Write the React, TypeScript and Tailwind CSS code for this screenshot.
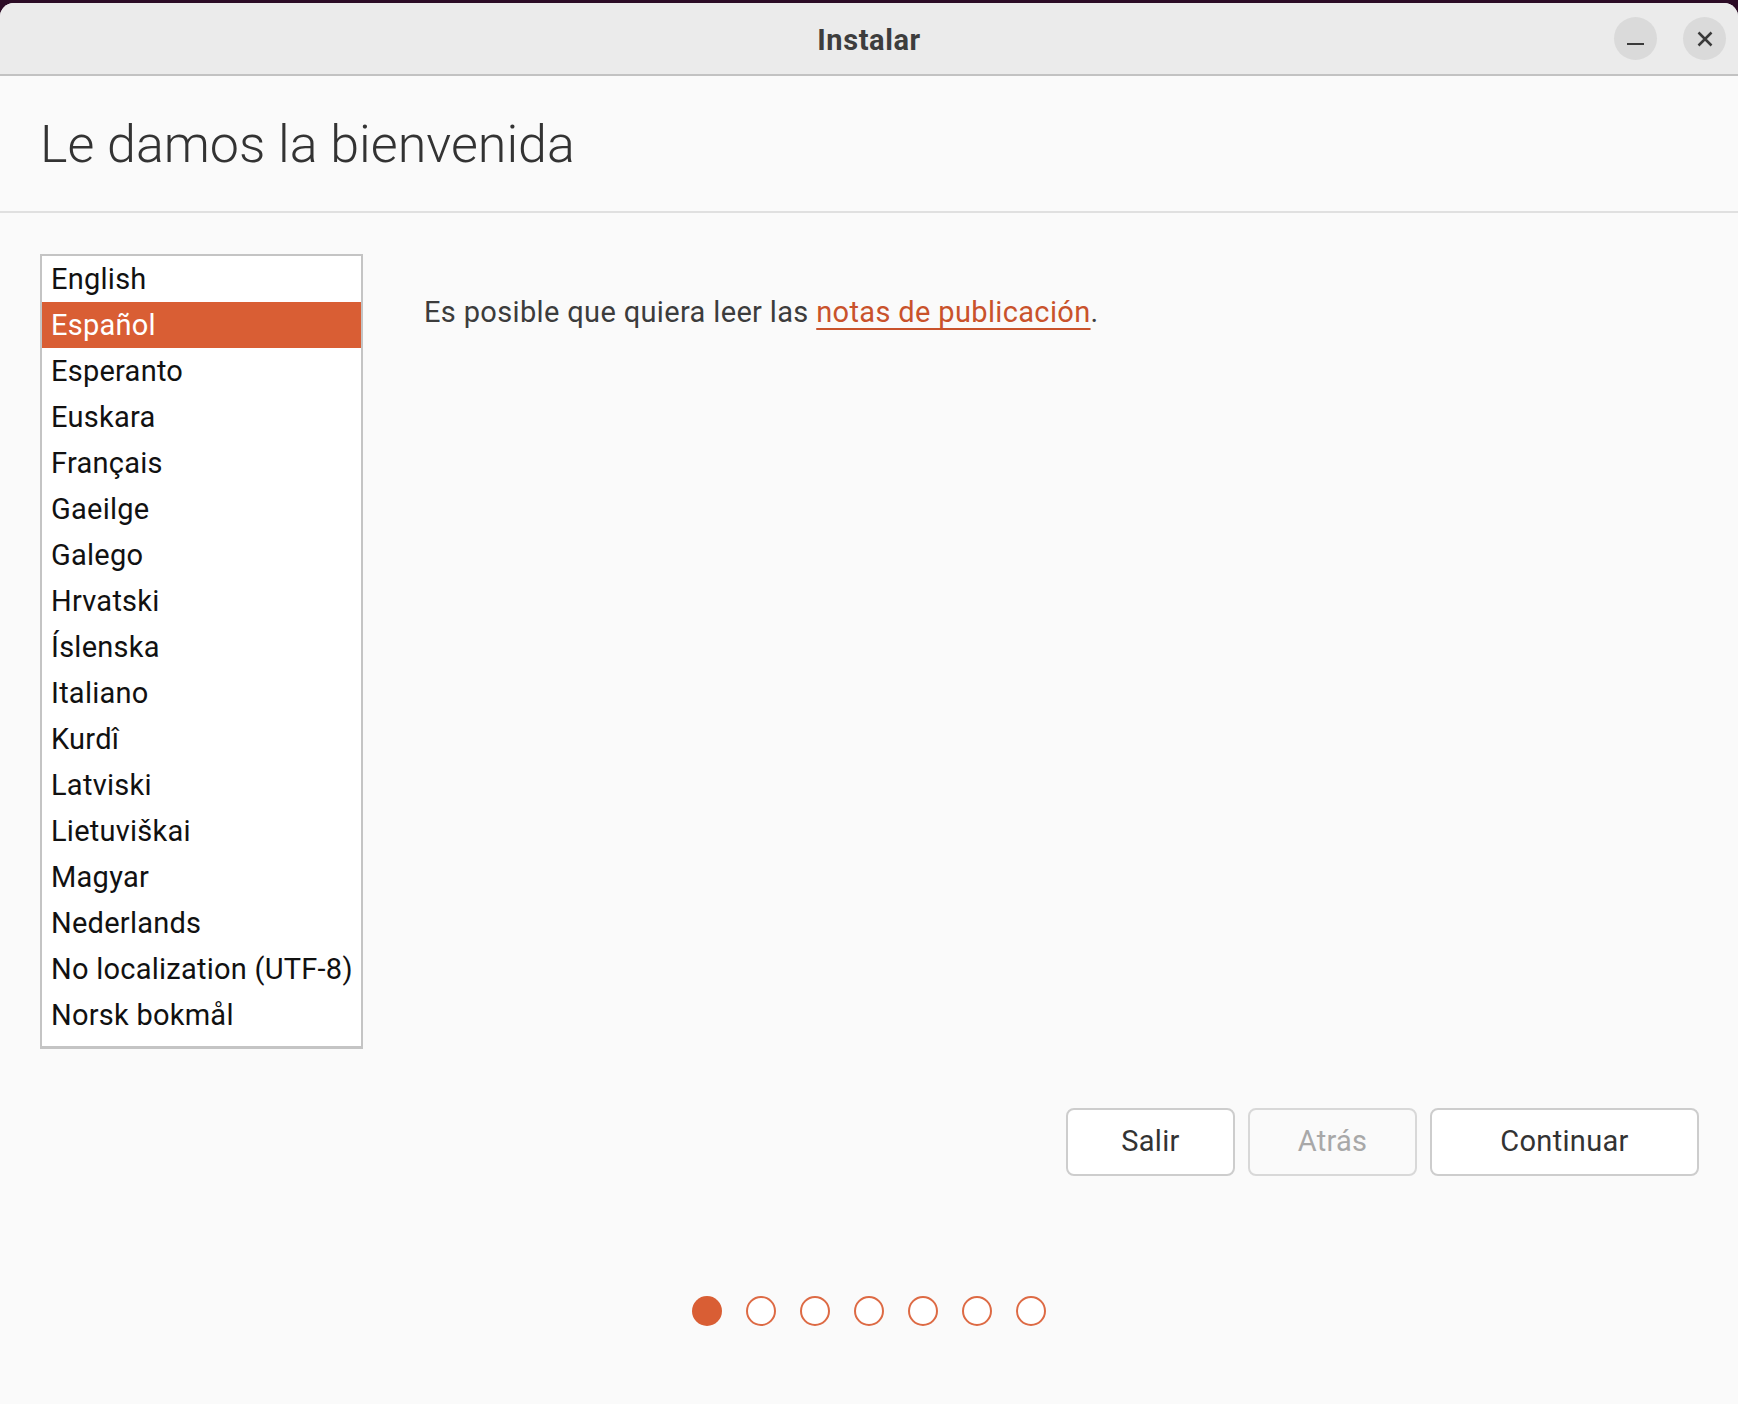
const languages = [
  "English",
  "Español",
  "Esperanto",
  "Euskara",
  "Français",
  "Gaeilge",
  "Galego",
  "Hrvatski",
  "Íslenska",
  "Italiano",
  "Kurdî",
  "Latviski",
  "Lietuviškai",
  "Magyar",
  "Nederlands",
  "No localization (UTF-8)",
  "Norsk bokmål",
]

const selected = "Español"

const TitleBar = () => (
  <div className="relative flex h-[73px] shrink-0 items-center justify-center rounded-t-[14px] border-b-2 border-[#c2c2c2] bg-[#ebebeb]">
    <span className="mt-[5px] text-[29px] font-bold tracking-[0.6px] text-[#3d3d3d]">
      Instalar
    </span>
    <div className="absolute right-[12px] top-[14px] flex gap-[26px]">
      <button className="flex h-[43px] w-[43px] items-center justify-center rounded-full bg-[#dadada]">
        <span className="mt-[11px] block h-[2.5px] w-[17px] bg-[#3a3a3a]" />
      </button>
      <button className="flex h-[43px] w-[43px] items-center justify-center rounded-full bg-[#dadada]">
        <svg width="16" height="16" viewBox="0 0 16 16" fill="none">
          <path d="M1.5 1.5 L14.5 14.5 M14.5 1.5 L1.5 14.5" stroke="#3a3a3a" strokeWidth="2.5" />
        </svg>
      </button>
    </div>
  </div>
)

const LanguageList = () => (
  <div className="h-[795px] w-[323px] shrink-0 overflow-hidden border-2 border-b-[3px] border-[#c4c4c4] bg-white">
    {languages.map((lang) => (
      <div
        key={lang}
        className={
          lang === selected
            ? "flex h-[46px] items-center bg-[#d95e34] pl-[9px] pt-[2px] text-[29px] tracking-[0.25px] text-white"
            : "flex h-[46px] items-center pl-[9px] pt-[2px] text-[29px] tracking-[0.25px] text-[#111111]"
        }
      >
        {lang}
      </div>
    ))}
  </div>
)

const StepDots = ({ total, current }: { total: number; current: number }) => (
  <div className="flex justify-center gap-[24px]">
    {Array.from({ length: total }).map((_, i) => (
      <span
        key={i}
        className={
          i === current
            ? "h-[30px] w-[30px] rounded-full bg-[#d95e34]"
            : "h-[30px] w-[30px] rounded-full border-[2.5px] border-[#dd6a44] bg-white"
        }
      />
    ))}
  </div>
)

export default function App() {
  return (
    <div
      className="h-[1404px] w-[1738px] bg-[#2c0c26] pt-[3px]"
      style={{ fontFamily: "Roboto, 'Noto Sans', sans-serif" }}
    >
      <div className="flex h-[1401px] flex-col rounded-t-[14px] bg-[#fafafa]">
        <TitleBar />

        <div className="flex h-[137px] shrink-0 items-center border-b-2 border-[#e0e0e0] pl-[40px]">
          <h1 className="mt-[2px] text-[52px] font-light text-[#333333]">
            Le damos la bienvenida
          </h1>
        </div>

        <div className="flex gap-[61px] pl-[40px] pt-[41px]">
          <LanguageList />
          <p className="mt-[37px] text-[29px] tracking-[0.35px] text-[#3c3c3c]">
            Es posible que quiera leer las{" "}
            <a href="#" className="text-[#c9522b] underline decoration-[2px] underline-offset-[6px]">
              notas de publicación
            </a>
            .
          </p>
        </div>

        <div className="mt-[59px] flex justify-end gap-[13px] pr-[39px]">
          <button className="h-[68px] w-[169px] rounded-[8px] border-2 border-[#cdcdcd] bg-white text-[29px] tracking-[0.3px] text-[#333333]">
            Salir
          </button>
          <button className="h-[68px] w-[169px] rounded-[8px] border-2 border-[#d8d8d8] bg-[#fafafa] text-[29px] tracking-[0.3px] text-[#a8a8a8]">
            Atrás
          </button>
          <button className="h-[68px] w-[269px] rounded-[8px] border-2 border-[#cdcdcd] bg-white text-[29px] tracking-[0.3px] text-[#333333]">
            Continuar
          </button>
        </div>

        <div className="mt-[120px]">
          <StepDots total={7} current={0} />
        </div>
      </div>
    </div>
  )
}
